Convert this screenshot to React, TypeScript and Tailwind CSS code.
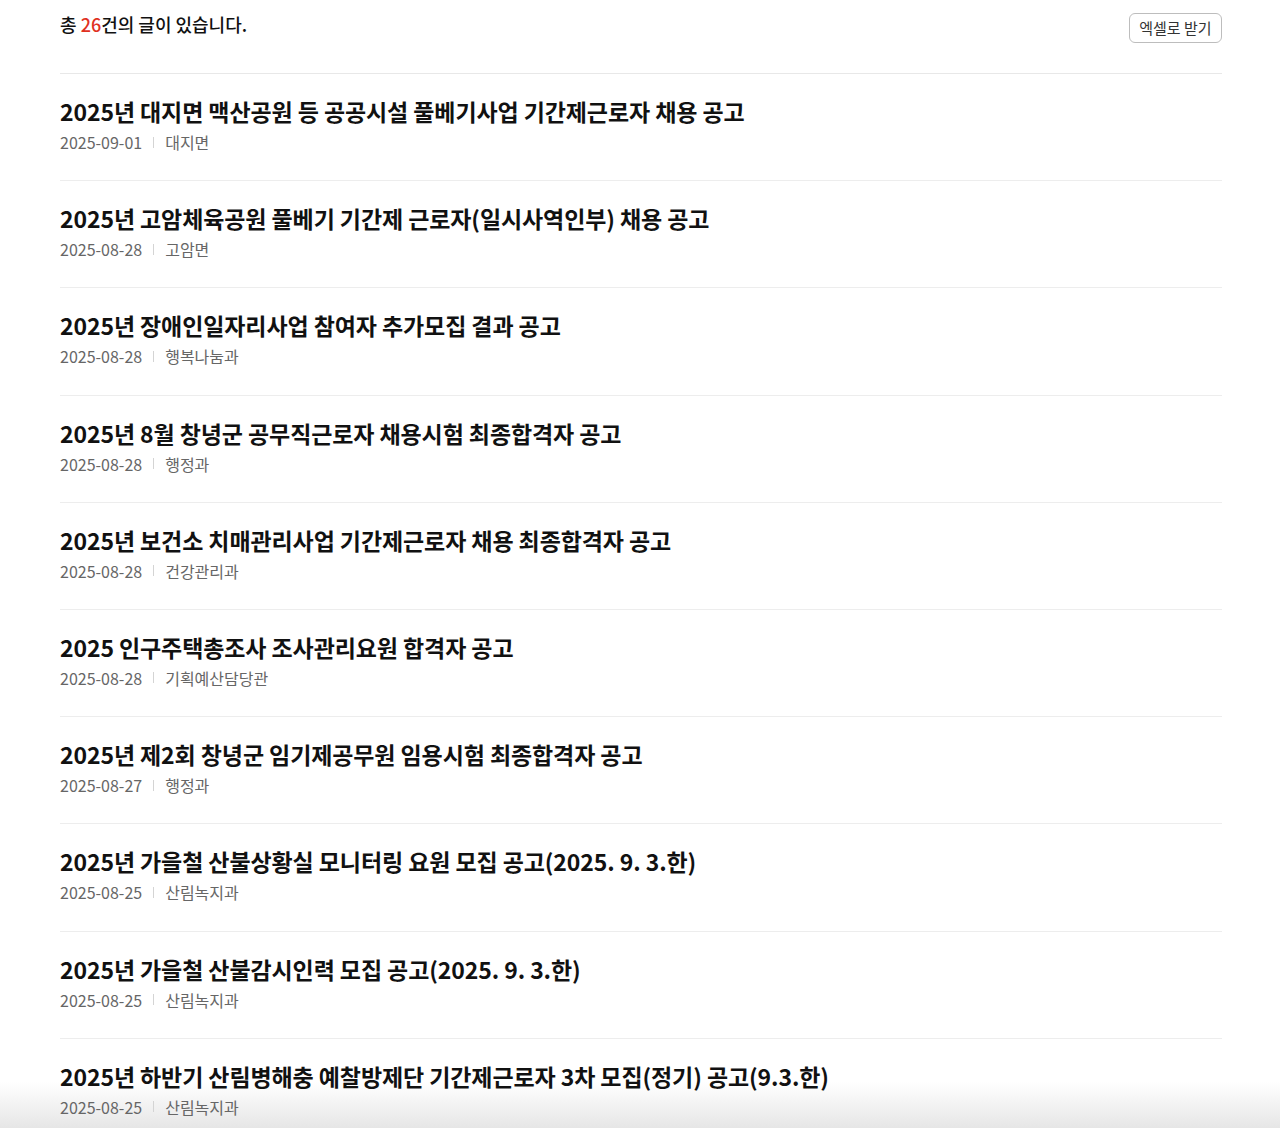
const posts = [
  { title: "2025년 대지면 맥산공원 등 공공시설 풀베기사업 기간제근로자 채용 공고", date: "2025-09-01", dept: "대지면" },
  { title: "2025년 고암체육공원 풀베기 기간제 근로자(일시사역인부) 채용 공고", date: "2025-08-28", dept: "고암면" },
  { title: "2025년 장애인일자리사업 참여자 추가모집 결과 공고", date: "2025-08-28", dept: "행복나눔과" },
  { title: "2025년 8월 창녕군 공무직근로자 채용시험 최종합격자 공고", date: "2025-08-28", dept: "행정과" },
  { title: "2025년 보건소 치매관리사업 기간제근로자 채용 최종합격자 공고", date: "2025-08-28", dept: "건강관리과" },
  { title: "2025 인구주택총조사 조사관리요원 합격자 공고", date: "2025-08-28", dept: "기획예산담당관" },
  { title: "2025년 제2회 창녕군 임기제공무원 임용시험 최종합격자 공고", date: "2025-08-27", dept: "행정과" },
  { title: "2025년 가을철 산불상황실 모니터링 요원 모집 공고(2025. 9. 3.한)", date: "2025-08-25", dept: "산림녹지과" },
  { title: "2025년 가을철 산불감시인력 모집 공고(2025. 9. 3.한)", date: "2025-08-25", dept: "산림녹지과" },
  { title: "2025년 하반기 산림병해충 예찰방제단 기간제근로자 3차 모집(정기) 공고(9.3.한)", date: "2025-08-25", dept: "산림녹지과" },
];

const App = () => {
  return (
    <div className="relative h-[1128px] overflow-hidden bg-white font-['Noto_Sans_CJK_KR',sans-serif] text-[#111]">
      {/* 하단 그라데이션 (배경) */}
      <div className="pointer-events-none absolute inset-x-0 bottom-0 h-[46px] bg-gradient-to-b from-white/0 to-[#e6e6e6]" />

      <div className="relative mx-[60px] w-[1162px]">
        {/* 상단: 총 건수 + 엑셀 버튼 */}
        <div className="flex h-[74px] items-start justify-between border-b border-[#e8e8e8]">
          <p className="mt-[10px] text-[18px] font-medium leading-[28px]">
            총 <span className="text-[#e0311f]">26</span>건의 글이 있습니다.
          </p>
          <button
            type="button"
            className="mt-[13px] h-[30px] rounded-[6px] border border-[#bdbdbd] px-[9.5px] text-[15px] leading-[28px] text-[#333]"
          >
            엑셀로 받기
          </button>
        </div>

        {/* 게시글 목록 */}
        <ul>
          {posts.map((post, i) => (
            <li
              key={i}
              className="border-b border-[#ededed] pt-[21px] pb-[26.2px]"
            >
              <div className="text-[23px] font-semibold leading-[32px] tracking-[-0.1px] text-[#111]">
                {post.title}
              </div>
              <div className="mt-[3px] flex items-center text-[16px] leading-[24px] text-[#666]">
                <span>{post.date}</span>
                <span className="mx-[11px] h-[11px] w-px bg-[#d4d4d4]" />
                <span>{post.dept}</span>
              </div>
            </li>
          ))}
        </ul>
      </div>
    </div>
  );
};

export default App;
